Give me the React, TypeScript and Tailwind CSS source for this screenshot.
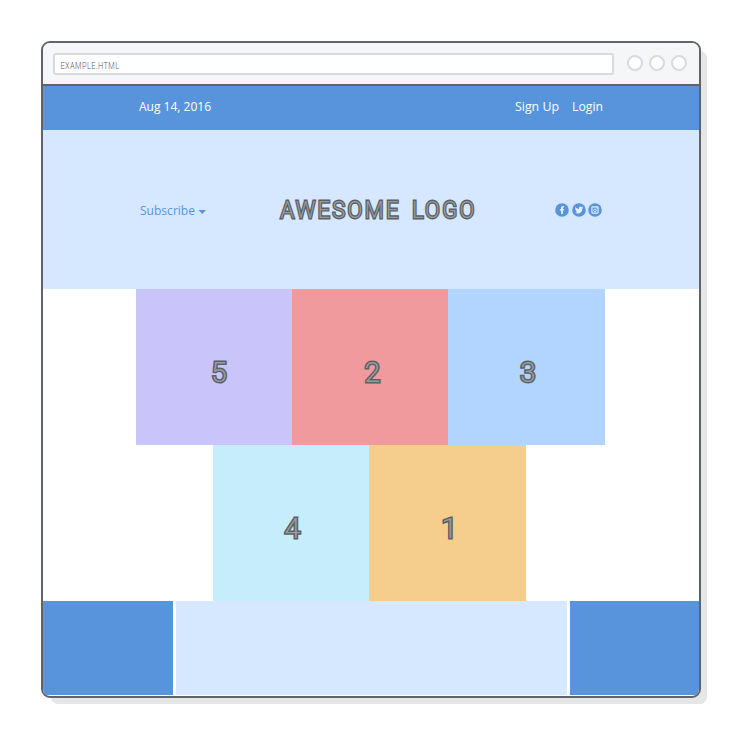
import React from "react";

const glyph =
  "block font-['Roboto'] font-light leading-none text-[#969c9f] [-webkit-text-stroke:3px_#5b6065] [paint-order:stroke]";

function Box({ label, className, shift }: { label: string; className: string; shift: string }) {
  return (
    <div className={`flex h-full items-center justify-center ${className}`}>
      <span className={`${glyph} text-[28.5px] ${shift}`}>{label}</span>
    </div>
  );
}

function Facebook() {
  return (
    <svg viewBox="0 0 14 14" className="size-[14px]">
      <circle cx="7" cy="7" r="6.8" fill="#5894db" />
      <path d="M6.1 11V7.6H4.9V6.1h1.2V5.2c0-1.6.8-2.4 2.9-2.1v1.4c-.9-.1-1.1.1-1.1.8v.8H9l-.2 1.5h-.9V11z" fill="#e3efff" />
    </svg>
  );
}

function Twitter() {
  return (
    <svg viewBox="0 0 14 14" className="size-[14px]">
      <circle cx="7" cy="7" r="6.8" fill="#5894db" />
      <path d="M3.2 4.1c1 1.1 2.1 1.7 3.7 1.8-.3-1.5.5-2.4 1.6-2.4.5 0 .9.2 1.3.5l1.2-.4-.7 1 .9-.2-.9 1c0 3-2 5.1-4.5 5.1-1.1 0-2-.3-2.8-.8.9.1 1.7-.2 2.3-.7-.8-.1-1.2-.5-1.5-1.2h.7c-.8-.3-1.3-.9-1.3-1.7l.7.2c-.8-.6-1-1.4-.7-2.2z" fill="#e3efff" />
    </svg>
  );
}

function Instagram() {
  return (
    <svg viewBox="0 0 14 14" className="size-[14px]">
      <circle cx="7" cy="7" r="6.8" fill="#5894db" />
      <rect x="3.9" y="3.9" width="6.2" height="6.2" rx=".6" fill="none" stroke="#e3efff" strokeWidth="1.1" />
      <circle cx="7" cy="7.3" r="1.3" fill="none" stroke="#e3efff" strokeWidth=".9" />
      <path d="M8.5 4.2H10v1.4H8.5z" fill="#e3efff" />
    </svg>
  );
}

export default function App() {
  return (
    <div className="h-[736px] w-[738px] overflow-hidden bg-white pl-[41px] pt-[40.5px] font-['Open_Sans','Noto_Sans',sans-serif]">
      <div className="flex h-[657px] w-[660px] flex-col overflow-hidden rounded-[9px] border-2 border-[#606468] bg-white shadow-[8px_8px_0_-2px_#e6e6e6]">
        <div className="flex h-[43.5px] shrink-0 items-center border-b-2 border-[#606468] bg-[#f5f6f8] pl-[10px]">
          <div className="mt-px flex h-[22px] w-[561px] items-center rounded-[3px] border-2 border-[#d7dade] bg-white pl-[5px] pt-[4px]">
            <svg className="h-[10px] w-[62px] overflow-visible">
              <text x="0.5" y="8" textLength="59" lengthAdjust="spacingAndGlyphs" fill="#55585b" className="font-['Roboto'] text-[9.5px] font-light tracking-[0.5px]">
                EXAMPLE.HTML
              </text>
            </svg>
          </div>
          <div className="ml-[13px] flex gap-[6px]">
            <i className="size-4 rounded-full border-2 border-[#d7dade] bg-white" />
            <i className="size-4 rounded-full border-2 border-[#d7dade] bg-white" />
            <i className="size-4 rounded-full border-2 border-[#d7dade] bg-white" />
          </div>
        </div>

        <div className="flex h-11 shrink-0 items-center justify-between bg-[#5894db] pb-[4px] pl-[96px] pr-[96px] text-white">
          <svg className="h-5 w-[73px] overflow-visible">
            <text x="0" y="14.5" textLength="72" lengthAdjust="spacingAndGlyphs" fill="white" className="text-[13px]">Aug 14, 2016</text>
          </svg>
          <div className="flex gap-3">
            <svg className="h-5 w-[45px] overflow-visible">
              <text x="0" y="14.5" textLength="44" lengthAdjust="spacingAndGlyphs" fill="white" className="text-[13px]">Sign Up</text>
            </svg>
            <svg className="h-5 w-[31px] overflow-visible">
              <text x="0" y="14.5" textLength="31" lengthAdjust="spacingAndGlyphs" fill="white" className="text-[13px]">Login</text>
            </svg>
          </div>
        </div>

        <div className="flex h-[159px] shrink-0 items-center bg-[#d6e8ff] pl-[97px]">
          <svg className="mt-[3px] h-5 w-[67px] overflow-visible">
            <text x="0" y="14" textLength="55" lengthAdjust="spacingAndGlyphs" fill="#5894db" className="text-[13px]">Subscribe</text>
            <path d="M58.5 9h7.5l-3.75 4z" fill="#5894db" />
          </svg>
          <svg
            className="ml-[72px] h-[30px] w-[196px] overflow-visible font-['Roboto'] text-[24.5px] font-light tracking-[2.6px] [paint-order:stroke] [word-spacing:4px]"
            fill="#969c9f"
            stroke="#5b6065"
            strokeWidth="2.8"
          >
            <text x="1.5" y="23" textLength="196" lengthAdjust="spacingAndGlyphs">AWESOME LOGO</text>
          </svg>
          <div className="ml-[80px] mt-px flex gap-[2.7px]">
            <Facebook />
            <Twitter />
            <Instagram />
          </div>
        </div>

        <div className="ml-[93px] grid h-[156px] w-[469px] shrink-0 grid-cols-[156px_156px_157px]">
          <Box label="5" className="bg-[#c9c5fb]" shift="mt-[12px] ml-[10px]" />
          <Box label="2" className="bg-[#f09a9d]" shift="mt-[12px] ml-[5px]" />
          <Box label="3" className="bg-[#b2d5ff]" shift="mt-[12px] ml-[3px]" />
        </div>
        <div className="ml-[170px] grid h-[156px] w-[313px] shrink-0 grid-cols-[156px_157px]">
          <Box label="4" className="bg-[#c5edfb]" shift="mt-[12px] ml-[3px]" />
          <Box label="1" className="bg-[#f5ce8e]" shift="mt-[12px] ml-[4px]" />
        </div>
        <div className="grid min-h-0 flex-1 grid-cols-[130px_391px_1fr] gap-[3px] pb-[0.5px]">
          <div className="bg-[#5894db]" />
          <div className="bg-[#d6e8ff]" />
          <div className="bg-[#5894db]" />
        </div>
      </div>
    </div>
  );
}
